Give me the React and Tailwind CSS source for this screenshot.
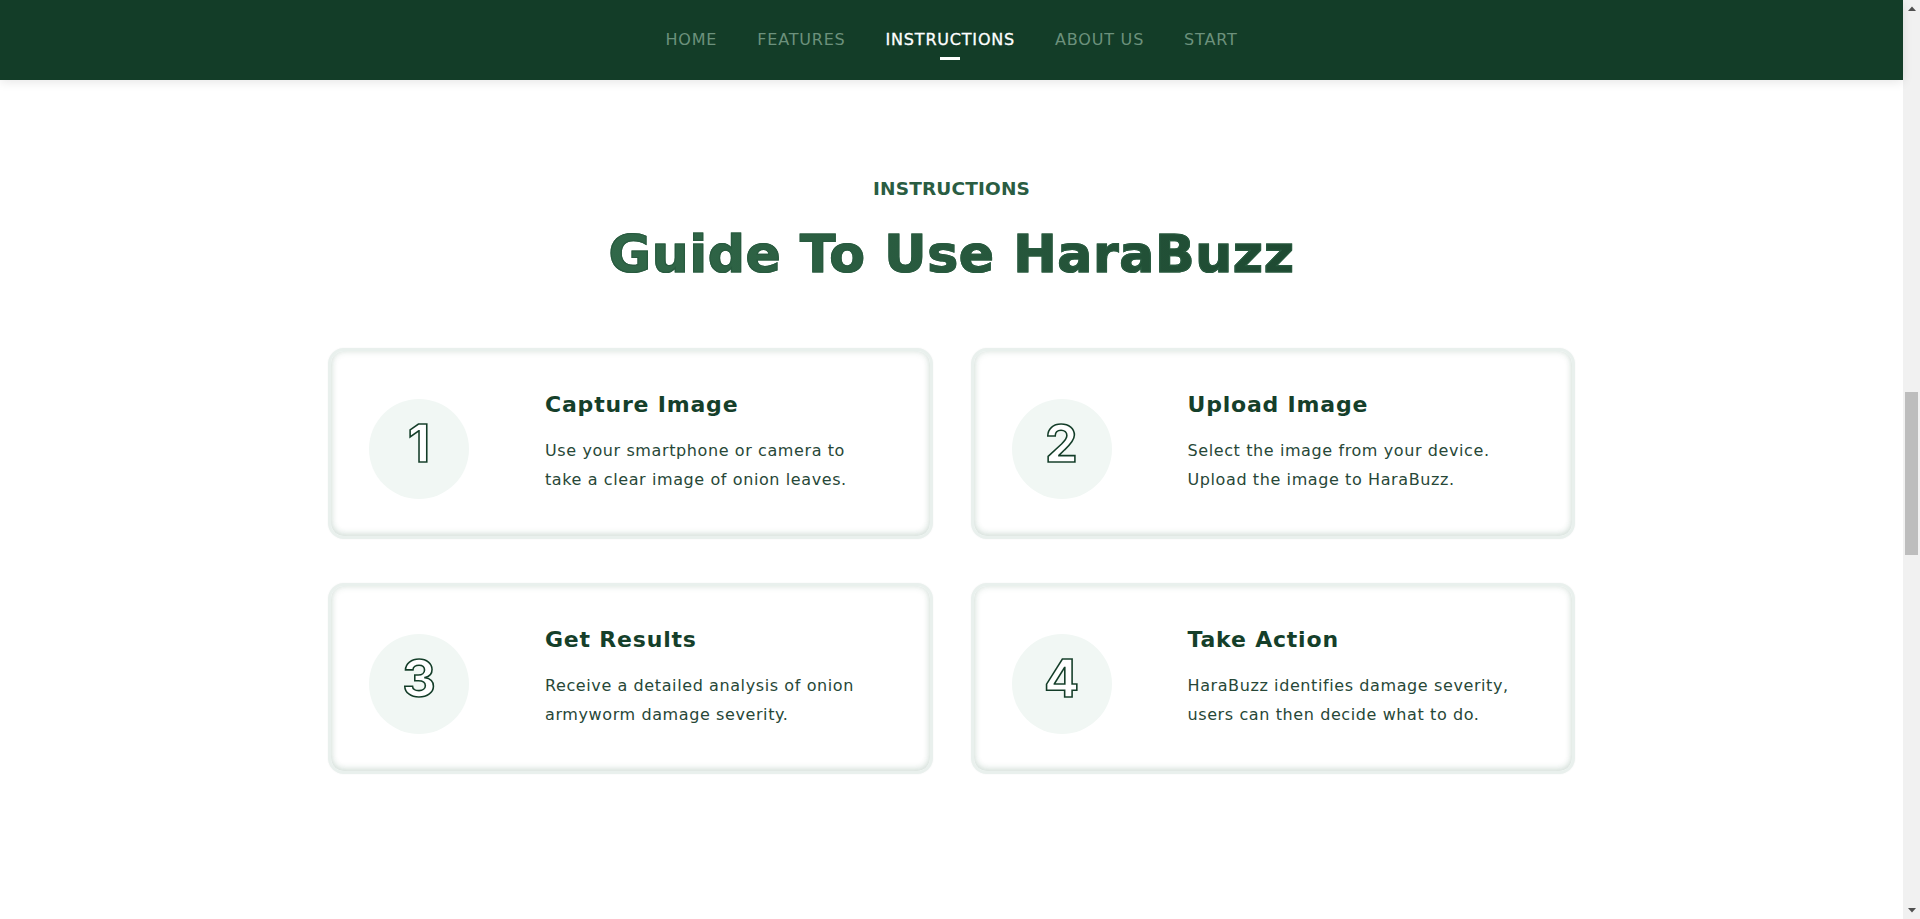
import React from "react";

const steps = [
  { n: "1", title: "Capture Image", lines: ["Use your smartphone or camera to", "take a clear image of onion leaves."] },
  { n: "2", title: "Upload Image", lines: ["Select the image from your device.", "Upload the image to HaraBuzz."] },
  { n: "3", title: "Get Results", lines: ["Receive a detailed analysis of onion", "armyworm damage severity."] },
  { n: "4", title: "Take Action", lines: ["HaraBuzz identifies damage severity,", "users can then decide what to do."] },
];

const navItems = ["Home", "Features", "Instructions", "About Us", "Start"];

function StepCard({ step }) {
  return (
    <div className="flex items-start rounded-[16px] border-[3px] border-[#e9f0ed] bg-white pt-[40px] pb-[37px] pl-[38px] shadow-[0_0_2px_rgba(0,0,0,0.05),inset_0_0_7px_rgba(40,95,68,0.17),inset_0_-3px_6px_rgba(40,95,68,0.1)]">
      <div className="mt-[8px] flex h-[100px] w-[100px] shrink-0 items-center justify-center rounded-full bg-[#f1f7f4] pb-[10px]">
        <span className="font-[Inter,sans-serif] text-[52px] leading-none font-bold text-white [-webkit-text-stroke:1.6px_#123c27]">
          {step.n}
        </span>
      </div>
      <div className="ml-[76px]">
        <h3 className="text-[22px] leading-[28px] font-bold tracking-[0.8px] text-[#153f2a]">
          {step.title}
        </h3>
        <p className="mt-[16.5px] text-[16px] leading-[29.3px] tracking-[0.6px] text-[#274737]">
          {step.lines[0]}
          <br />
          {step.lines[1]}
        </p>
      </div>
    </div>
  );
}

function Scrollbar() {
  return (
    <div className="flex w-[17px] shrink-0 flex-col bg-[#f1f1f1]">
      <div className="flex h-[17px] items-center justify-center">
        <svg width="8" height="5" viewBox="0 0 8 5">
          <path d="M0 5 L4 0.5 L8 5 Z" fill="#505050" />
        </svg>
      </div>
      <div className="flex-1">
        <div className="mx-[2px] mt-[375px] h-[163px] bg-[#bdbdbd]" />
      </div>
      <div className="flex h-[17px] items-center justify-center">
        <svg width="8" height="5" viewBox="0 0 8 5">
          <path d="M0 0 L4 4.5 L8 0 Z" fill="#505050" />
        </svg>
      </div>
    </div>
  );
}

export default function App() {
  return (
    <div className="flex h-[919px] overflow-hidden bg-white font-['DejaVu_Sans','Noto_Sans',sans-serif]">
      <div className="min-w-0 flex-1">
        <header className="relative z-10 flex h-[80px] items-center justify-center bg-[#133d28] shadow-[0_2px_10px_rgba(0,0,0,0.1)]">
          <nav>
            <ul className="flex gap-[40px]">
              {navItems.map((item) => {
                const active = item === "Instructions";
                return (
                  <li key={item} className="relative">
                    <a
                      href={"#" + item.toLowerCase().replace(" ", "")}
                      className={
                        "block text-[16px] leading-[24px] tracking-[0.8px] uppercase " +
                        (active ? "text-white [-webkit-text-stroke:0.3px_#ffffff]" : "text-[#6c917c]")
                      }
                    >
                      {item}
                    </a>
                    {active && (
                      <span className="absolute top-[29px] left-1/2 h-[2.5px] w-[20px] -translate-x-1/2 bg-white" />
                    )}
                  </li>
                );
              })}
            </ul>
          </nav>
        </header>

        <section id="instructions" className="pt-[97px]">
          <p className="text-center text-[18.5px] leading-[24px] font-bold tracking-[0.15px] text-[#2a5d42]">
            INSTRUCTIONS
          </p>
          <h2 className="mt-[22px] text-center text-[52px] leading-[62px] font-bold">
            <span className="bg-gradient-to-r from-[#316849] to-[#1e4a32] bg-clip-text tracking-[0.6px] text-transparent [-webkit-text-stroke:1.2px_#285a3f]">
              Guide To Use HaraBuzz
            </span>
          </h2>
          <div className="mx-auto mt-[63px] grid w-[1247px] grid-cols-2 gap-x-[38px] gap-y-[44px]">
            {steps.map((s) => (
              <StepCard key={s.n} step={s} />
            ))}
          </div>
        </section>
      </div>
      <Scrollbar />
    </div>
  );
}
